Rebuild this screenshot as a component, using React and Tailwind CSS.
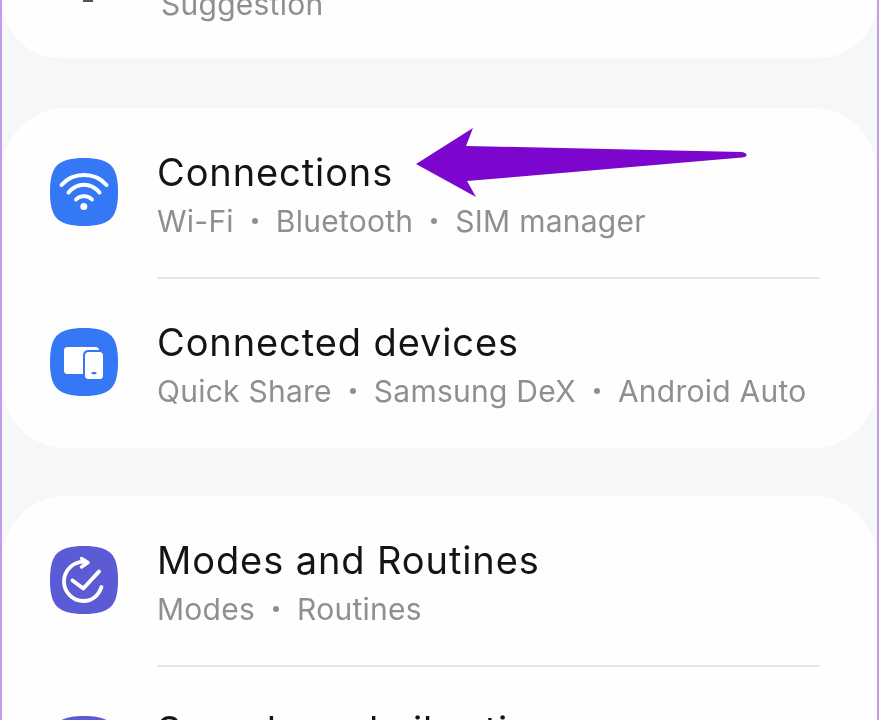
const Squircle = ({ fill, children }) => (
  <svg width="68" height="68" viewBox="0 0 68 68" className="shrink-0">
    <path d="M34 0C60 0 68 8 68 34C68 60 60 68 34 68C8 68 0 60 0 34C0 8 8 0 34 0Z" fill={fill} />
    {children}
  </svg>
);

const WifiIcon = () => (
  <Squircle fill="#3478f6">
    <g fill="none" stroke="#fff" strokeLinecap="round">
      <path d="M11.500 27C23 13.500 45 13.500 56.500 27" strokeWidth="4" />
      <path d="M18.500 34.500C27 24 41 24 49.500 34.500" strokeWidth="4" />
      <path d="M26 41.500C30 37 38 37 42 41.500" strokeWidth="3.800" />
    </g>
    <circle cx="33.800" cy="48.500" r="3.500" fill="#fff" />
  </Squircle>
);

const DevicesIcon = () => (
  <Squircle fill="#3478f6">
    <rect x="14" y="19" width="35" height="27" rx="3.500" fill="#fff" />
    <rect x="33" y="22" width="22" height="31" rx="5" fill="#3478f6" />
    <rect x="35" y="24" width="18" height="27" rx="3.500" fill="#fff" />
    <rect x="41.500" y="44" width="5" height="2.200" rx="1" fill="#3478f6" />
  </Squircle>
);

const ModesIcon = () => (
  <Squircle fill="#5c5bd6">
    <g fill="none" stroke="#fff" strokeLinecap="round" strokeLinejoin="round">
      <path d="M35 16C23.500 15 14 24 14 35.500C14 46.500 23 55 33.500 55C42 55 48.500 49.500 51.500 41" strokeWidth="3.800" />
      <path d="M31.500 12.500L38 16.500L31.500 21" strokeWidth="3.400" />
      <path d="M22.500 34.500L33.300 42.500L49 25.500" strokeWidth="4" />
    </g>
  </Squircle>
);

const Row = ({ icon, title, subtitle, divider }) => (
  <div className="relative flex h-[170px] items-start pl-[48px] pr-[57px]">
    <div className="mt-[50px]">{icon}</div>
    <div className="ml-[39px] flex-1">
      <div className="mt-[38px] h-[52px] whitespace-nowrap text-[38px] leading-[52px] tracking-[0.9px] text-[#141414]">{title}</div>
      <div className="mt-[5px] flex h-[36px] items-center whitespace-nowrap text-[30px] leading-[36px] tracking-[0.25px] text-[#8f8f8f]">
        {subtitle.map((s, i) => (
          <span key={s} className="flex items-center">
            {i > 0 && <span className="mx-[18px] h-[6px] w-[6px] rounded-full bg-[#8f8f8f]" />}
            {s}
          </span>
        ))}
      </div>
    </div>
    {divider && <div className="absolute -bottom-px left-[155px] right-[57px] h-[2px] bg-[#e6e7e9]" />}
  </div>
);

const Arrow = () => (
  <svg className="absolute left-[408px] top-[12px]" width="345" height="80" viewBox="410 120 345 80">
    <path d="M416 164L473 128L466 146L742 152Q747 153 746.500 155.500Q746 157 742 157.500L467 181L476 197Z" fill="#7d06cf" />
  </svg>
);

export default function App() {
  return (
    <div className="h-[720px] w-[879px] overflow-hidden border-x-2 border-[#c49be8] bg-[#f6f7f9] font-['Inter',sans-serif] blur-[0.4px]">
      <div className="relative flex h-[58px] flex-col justify-end overflow-hidden rounded-b-[64px] bg-[#fefefe]">
        <div className="absolute left-[81px] top-0 h-[2px] w-[10px] bg-[#555]" />
        <div className="pb-[36px] pl-[159px] text-[30px] leading-[36px] tracking-[0.25px] text-[#8f8f8f]">Suggestion</div>
      </div>
      <div className="relative mt-[50px] rounded-[64px] bg-[#fefefe]">
        <Row icon={<WifiIcon />} title="Connections" subtitle={["Wi-Fi", "Bluetooth", "SIM manager"]} divider />
        <Row icon={<DevicesIcon />} title="Connected devices" subtitle={["Quick Share", "Samsung DeX", "Android Auto"]} />
        <Arrow />
      </div>
      <div className="mt-[48px] rounded-t-[64px] bg-[#fefefe]">
        <Row icon={<ModesIcon />} title="Modes and Routines" subtitle={["Modes", "Routines"]} divider />
        <Row icon={<Squircle fill="#5c5bd6" />} title="Sounds and vibration" subtitle={["Sound mode", "Ringtone"]} />
      </div>
    </div>
  );
}
